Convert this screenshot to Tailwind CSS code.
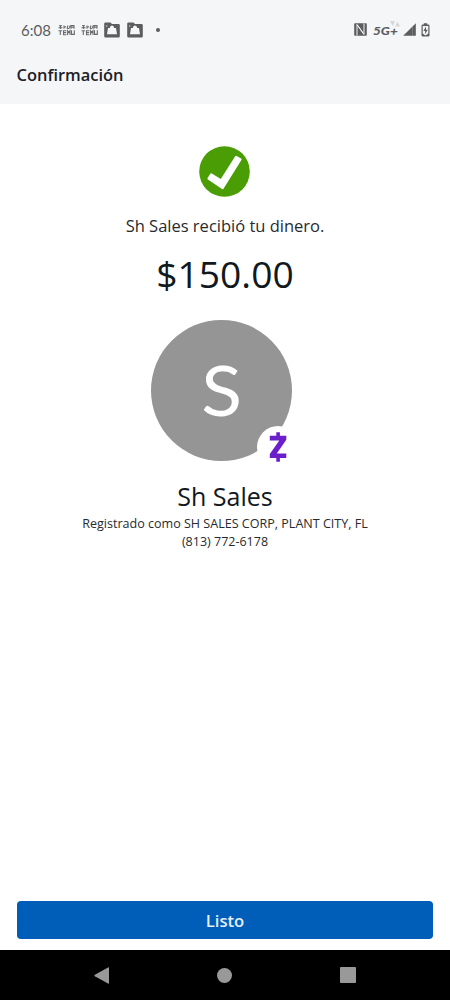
<!DOCTYPE html>
<html lang="es">
<head>
<meta charset="utf-8">
<title>Confirmación</title>
<script src="https://cdn.jsdelivr.net/npm/@tailwindcss/browser@4"></script>
</head>
<body class="bg-white">
<div class="flex h-[1000px] w-[450px] flex-col overflow-hidden bg-white font-['Open_Sans','Noto_Sans',sans-serif] text-[#272b30]">
  <header class="h-[104px] bg-[#f5f6f8]">
    <div class="flex h-[50px] items-center pt-[9px] pl-[21px] pr-[20px] text-[#5c5d5f]">
      <span class="w-[37px] whitespace-nowrap font-['Lato',sans-serif] text-[15px] leading-5">6:08</span>
      <svg class="mr-[6px]" width="17" height="12" viewBox="0 0 17 12" fill="none" stroke="#6a6b6d" stroke-width="1.1">
        <path d="M.5 3.8h4M2.5 1v4M1 1.8h3M6 1.5v3.2M6 3.5l2-1M9 4.5h2M10 1.5l-1 3M12 1.5l-.5 3M13 4.8V1.6h3v3.200M13 3.2h3"/>
        <path d="M.5 6.7h3.6M2.3 6.7V11M8.400 6.700H5.500v4h2.900M5.500 8.600h2.600M9.600 11V6.700l1.200 1.800L12 6.700V11M13.500 6.300v4.100h2.800V6.300"/>
      </svg>
      <svg class="mr-[6px]" width="17" height="12" viewBox="0 0 17 12" fill="none" stroke="#6a6b6d" stroke-width="1.1">
        <path d="M.5 3.8h4M2.5 1v4M1 1.8h3M6 1.5v3.2M6 3.5l2-1M9 4.5h2M10 1.5l-1 3M12 1.5l-.5 3M13 4.8V1.6h3v3.200M13 3.2h3"/>
        <path d="M.5 6.7h3.6M2.3 6.7V11M8.400 6.700H5.500v4h2.900M5.500 8.600h2.600M9.600 11V6.700l1.200 1.800L12 6.700V11M13.500 6.300v4.100h2.800V6.300"/>
      </svg>
      <svg class="mr-[7px]" width="16" height="16" viewBox="0 0 16 16">
        <path fill="#5c5d5f" d="M1.500.5h5L8 2h6.500q1.300 0 1.300 1.300v11q0 1.300-1.300 1.300h-13Q.2 15.600.2 14.300V1.800Q.2.5 1.500.5z"/>
        <path fill="#f5f6f8" d="M4 6h1.800q.2-2.500 2.200-2.500T10.200 6H12l1 6.300H3zM2 4l.8-.7.800.7-.8.700z"/>
      </svg>
      <svg width="16" height="16" viewBox="0 0 16 16">
        <path fill="#5c5d5f" d="M1.500.5h5L8 2h6.500q1.300 0 1.300 1.300v11q0 1.300-1.300 1.300h-13Q.2 15.600.2 14.300V1.800Q.2.5 1.500.5z"/>
        <path fill="#f5f6f8" d="M4 6h1.800q.2-2.500 2.200-2.500T10.200 6H12l1 6.300H3zM2 4l.8-.7.800.7-.8.700z"/>
      </svg>
      <span class="ml-[13px] size-1 rounded-full bg-[#5c5d5f]"></span>
      <svg class="ml-auto" width="13" height="13" viewBox="0 0 13 13">
        <path fill="#5c5d5f" d="M1 .2h11q.8 0 .8.8v11q0 .8-.8.8H1q-.8 0-.8-.8V1Q.2.2 1 .2z"/>
        <path fill="none" stroke="#f5f6f8" stroke-width="1" d="M3 12.500V1.500l6.800 9.800M10 .5v11M3.200 1.800 9.800 11"/>
      </svg>
      <div class="relative ml-[6px] flex w-[30px] items-center">
        <span class="inline-block origin-left scale-x-[1.12] whitespace-nowrap pt-[2px] font-['Lato',sans-serif] text-[12px] font-black italic leading-4">5G+</span>
        <svg class="absolute top-[-1px] left-[17px]" width="10" height="7" viewBox="0 0 10 7" fill="#d5d6d8"><path d="M0 1h5L2.800 6zM5 6.500 7.500 1.500 10 6.500z"/></svg>
      </div>
      <svg width="13" height="13" viewBox="0 0 13 13"><path fill="#5c5d5f" d="M12.800.2v12.600H.2z"/><path stroke="#85868a" stroke-width=".7" d="M9.500 4v9"/></svg>
      <svg class="ml-[5px]" width="9" height="14" viewBox="0 0 9 14">
        <path fill="#5c5d5f" d="M2.800.3h3.400v1.200h1q1.300 0 1.300 1.300v9.400q0 1.300-1.300 1.300H1.800Q.5 13.500.5 12.200V2.800q0-1.300 1.300-1.300h1z"/>
        <path fill="#f5f6f8" d="M1.700 3h5.600v7.500L4.500 12.500 1.700 10.500z"/>
        <path fill="#5c5d5f" d="M5 3.500 2.400 8h1.800v3.300L6.700 6.800H5z"/>
      </svg>
    </div>
    <h1 class="pt-[13px] pl-[16.500px] text-[16.450px] font-semibold leading-6 text-[#1b2026]">Confirmación</h1>
  </header>

  <main class="flex flex-1 flex-col items-center">
    <svg class="mt-[42px] mr-px" width="51" height="51" viewBox="0 0 51 51">
      <circle cx="25.500" cy="25.500" r="25.300" fill="#4a9d05"/>
      <path fill="#fff" d="M36.200 10.200q.6-.9 1.500-.3l4.400 2.700q.9.600.3 1.500L24.500 42.700q-.6.900-1.500.3L8.900 33.400q-.9-.6-.3-1.500l2.700-4.200q.6-.9 1.500-.3l9 5.700z"/>
    </svg>
    <p class="mt-[17px] text-[16.500px] leading-6">Sh Sales recibió tu dinero.</p>
    <p class="mt-[9px] text-[37.200px] leading-[54px] text-[#101820]">$150.00</p>
    <div class="relative mt-[19px] mr-[7px] flex size-[141px] items-center justify-center rounded-full bg-[#959595]">
      <span class="inline-block scale-x-[1.09] pb-[3px] pl-px font-['Lato',sans-serif] text-[69px] leading-none text-white">S</span>
      <div class="absolute top-[106px] left-[106px] flex size-[42px] items-center justify-center rounded-full bg-white">
        <svg width="18" height="30" viewBox="0 0 18 30" fill="#6a1fcb"><path d="M7.300.2h3.600v3.500h6.400v4L7.800 21.400h9.500v4.700h-6.400v3.700H7.300v-3.700H.8v-4L10.300 8.400H.8V3.700h6.500z"/></svg>
      </div>
    </div>
    <h2 class="mt-[17px] text-[25px] leading-9 text-[#101820]">Sh Sales</h2>
    <p class="mt-px text-[12.550px] leading-[18px]">Registrado como SH SALES CORP, PLANT CITY, FL</p>
    <p class="text-[12.500px] leading-[18px]">(813) 772-6178</p>
  </main>

  <div class="px-[17px] pb-[11px]">
    <button class="block h-[38px] w-full rounded-[4px] bg-[#005eb8] pt-px text-[16.700px] font-semibold leading-[38px] text-[#e4effa]">Listo</button>
  </div>
  <nav class="flex h-[50px] items-center justify-between bg-black px-[94px]">
    <svg width="16" height="17" viewBox="0 0 16 17"><path fill="#999" d="M14 .4q1-.4 1 .7v14.800q0 1.100-1 .7L.9 9.300q-1-.800 0-1.600z"/></svg>
    <span class="mr-px size-[15px] rounded-full bg-[#999]"></span>
    <span class="size-4 rounded-[1px] bg-[#999]"></span>
  </nav>
</div>
</body>
</html>
